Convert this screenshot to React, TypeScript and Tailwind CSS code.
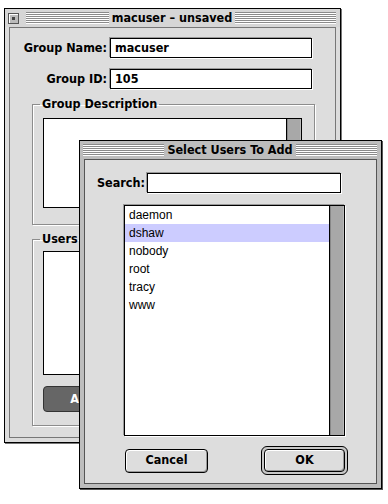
const bold = "font-['DejaVu_Sans_Condensed','DejaVu_Sans',sans-serif] font-bold text-[12.5px]";
const geneva = "font-['Liberation_Sans',Arial,sans-serif]";

function Stripes() {
  return (
    <div className="h-[12px] flex-1 bg-[repeating-linear-gradient(to_bottom,#8a8a8a_0px,#8a8a8a_1px,#ffffff_1px,#ffffff_2px)]" />
  );
}

function CloseBox() {
  return (
    <div className="mr-[7px] flex h-[11px] w-[11px] items-center justify-center border border-[#555] bg-[#bbb] shadow-[inset_1px_1px_0_#fff]">
      <div className="h-[3px] w-[3px] bg-[#444]" />
    </div>
  );
}

function TitleBar({ title, close, bg }: { title: string; close?: boolean; bg: string }) {
  return (
    <div className={`grid h-[18px] grid-cols-[1fr_auto_1fr] items-center pl-[3px] pr-[4px] ${bg}`}>
      <div className="flex items-center">
        {close && <CloseBox />}
        <Stripes />
      </div>
      <span className={`${bold} px-[3px] leading-none text-black`}>{title}</span>
      <div className="flex items-center">
        <Stripes />
      </div>
    </div>
  );
}

function TextField({ value, width }: { value?: string; width: string }) {
  return (
    <div
      className={`${bold} flex h-[20px] items-center border border-black bg-white pl-[4px] text-black shadow-[-1px_-1px_0_#999,1px_1px_0_#fff] ${width}`}
    >
      {value}
    </div>
  );
}

function ScrollTrack() {
  return <div className="w-[15px] border-l border-black bg-[#a8a8a8] shadow-[inset_1px_0_0_#888,inset_-1px_0_0_#bbb]" />;
}

const groupBox =
  "border border-[#8c8c8c] shadow-[inset_1px_1px_0_#fff,1px_1px_0_#fff]";

function BackWindow() {
  return (
    <div className="absolute left-[4px] top-[8px] flex h-[435px] w-[337px] flex-col border border-black bg-[#dcdcdc] shadow-[1px_1px_0_#777]">
      <TitleBar title="macuser – unsaved" close bg="bg-[#d6d6d6]" />
      <div className="flex flex-1 flex-col px-[4px] pb-[4px]">
        <div className="flex flex-1 flex-col border border-[#777] bg-[#dddddd]">
          <div className="mt-[10px] flex items-center gap-[3px]">
            <span className={`${bold} w-[97px] text-right text-black`}>Group Name:</span>
            <TextField value="macuser" width="w-[202px]" />
          </div>
          <div className="mt-[11px] flex items-center gap-[3px]">
            <span className={`${bold} w-[97px] text-right text-black`}>Group ID:</span>
            <TextField value="105" width="w-[202px]" />
          </div>

          <fieldset className={`ml-[22px] mt-[8px] w-[283px] pb-[16px] ${groupBox}`}>
            <legend className={`${bold} ml-[7px] px-[2px] leading-[14px] text-black`}>Group Description</legend>
            <div className="ml-[10px] mt-[7px] flex h-[90px] w-[259px] border border-black bg-white">
              <div className="flex-1" />
              <ScrollTrack />
            </div>
          </fieldset>

          <fieldset className={`ml-[22px] mt-[7px] w-[283px] pb-[13px] ${groupBox}`}>
            <legend className={`${bold} ml-[7px] px-[2px] leading-[14px] text-black`}>Users</legend>
            <div className="ml-[10px] mt-[5px] flex h-[124px] w-[259px] border border-black bg-white">
              <div className="flex-1" />
              <ScrollTrack />
            </div>
            <div
              className={`${bold} ml-[10px] mt-[11px] flex h-[26px] w-[92px] items-center justify-center rounded-[4px] border border-[#333] bg-[#666] text-white`}
            >
              Add...
            </div>
          </fieldset>
        </div>
      </div>
    </div>
  );
}

const users = ["daemon", "dshaw", "nobody", "root", "tracy", "www"];

function FrontWindow() {
  return (
    <div className="absolute left-[79px] top-[140px] flex h-[349px] w-[303px] flex-col border border-black bg-[#bdbdbd] shadow-[1px_1px_0_#555]">
      <TitleBar title="Select Users To Add" bg="bg-[#bdbdbd]" />
      <div className="flex flex-1 flex-col px-[4px] pb-[4px]">
        <div className="flex flex-1 flex-col border border-[#555] bg-[#dddddd]">
          <div className="mt-[13px] flex items-center gap-[2px]">
            <span className={`${bold} w-[60px] text-right text-black`}>Search:</span>
            <TextField width="w-[194px]" />
          </div>

          <div className="ml-[39px] mt-[12px] flex h-[231px] w-[221px] border border-black bg-white shadow-[-1px_-1px_0_#999,1px_1px_0_#fff]">
            <ul className={`${geneva} flex-1 text-[12px] text-black`}>
              {users.map((u) => (
                <li key={u} className={`h-[18px] px-[4px] leading-[18px] ${u === "dshaw" ? "bg-[#ccccff]" : ""}`}>
                  {u}
                </li>
              ))}
            </ul>
            <ScrollTrack />
          </div>

          <div className="mt-[10px] flex h-[29px] items-center">
            <div
              className={`${bold} ml-[40px] flex h-[24px] w-[83px] items-center justify-center rounded-[4px] border border-black bg-[#dddddd] text-black shadow-[inset_1px_1px_0_#fff,inset_-1px_-1px_0_#999]`}
            >
              Cancel
            </div>
            <div className="ml-[53px] flex h-[29px] w-[87px] rounded-[6px] border border-black bg-[#c8c8c8] p-[2px]">
              <div
                className={`${bold} flex flex-1 items-center justify-center rounded-[4px] border border-black bg-[#dddddd] text-black shadow-[inset_1px_1px_0_#fff,inset_-1px_-1px_0_#999]`}
              >
                OK
              </div>
            </div>
          </div>
        </div>
      </div>
    </div>
  );
}

export default function App() {
  return (
    <div className="relative h-[504px] w-[388px] overflow-hidden bg-white">
      <BackWindow />
      <FrontWindow />
    </div>
  );
}
